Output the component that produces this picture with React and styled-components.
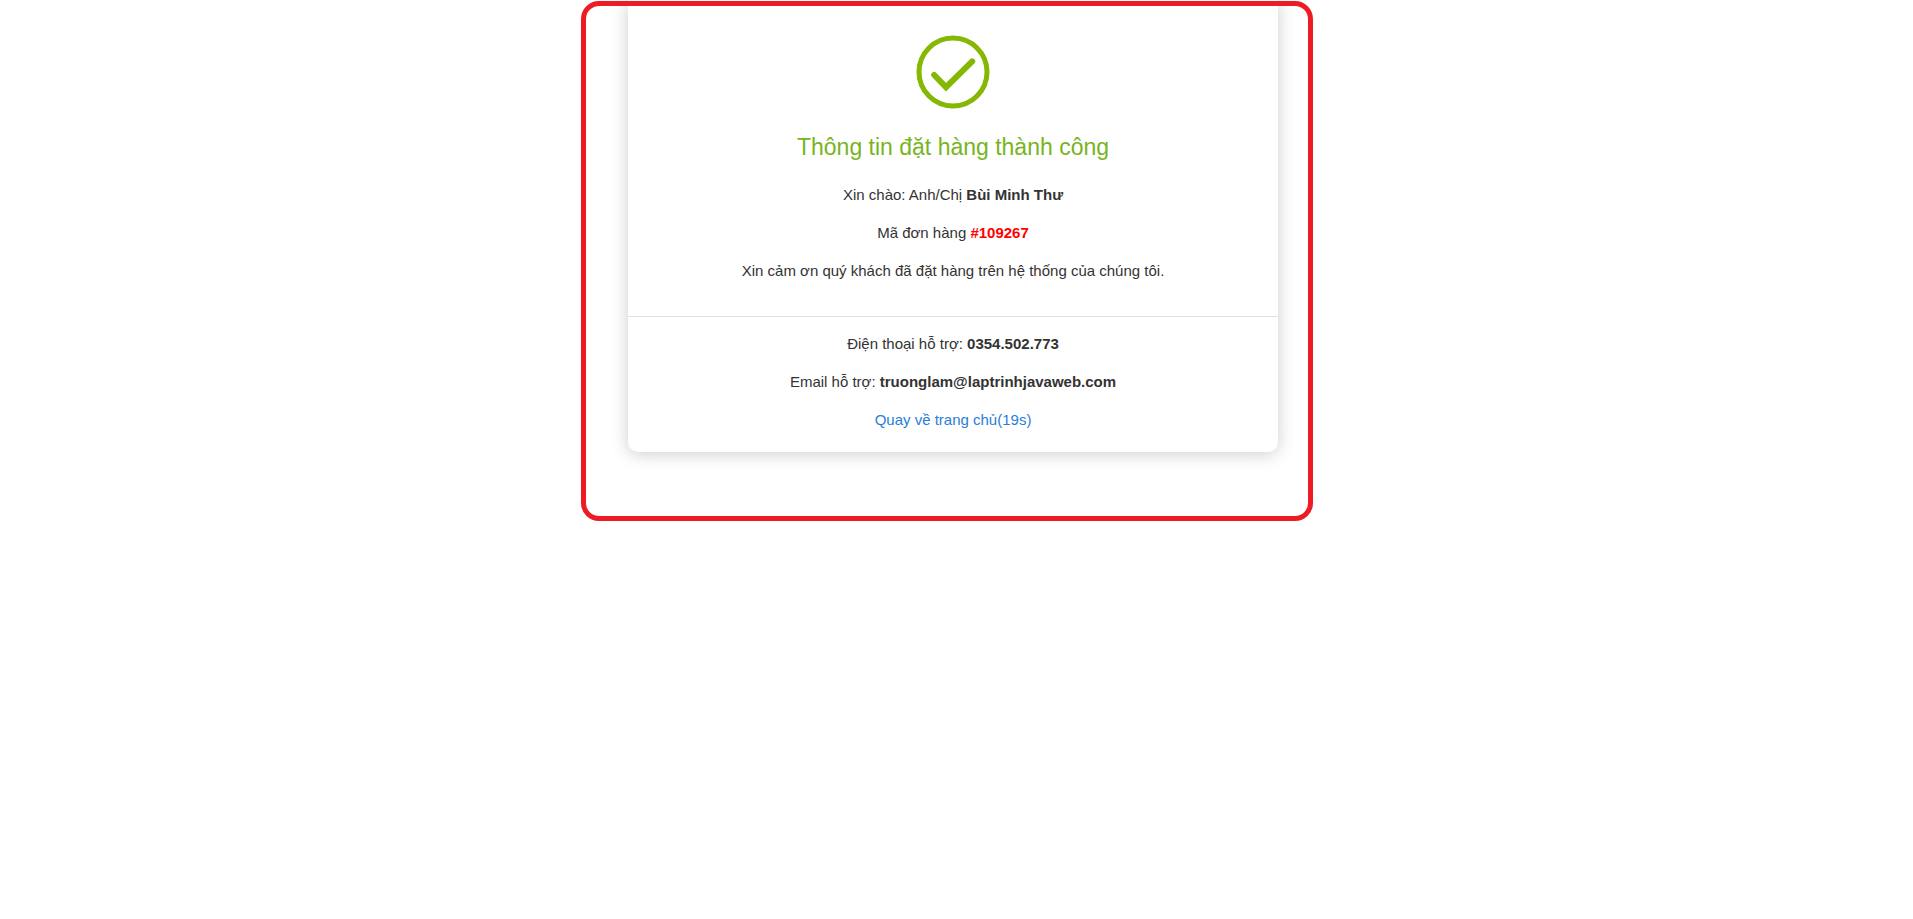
import React from "react";
import styled, { createGlobalStyle } from "styled-components";

const GlobalStyle = createGlobalStyle`
  *, *::before, *::after { box-sizing: border-box; }
  body {
    margin: 0;
    background: #fff;
    color: #333;
    font-family: "Liberation Sans", Arial, Helvetica, sans-serif;
    font-size: 15px;
    line-height: 24px;
  }
`;

const Page = styled.main`
  display: flex;
  justify-content: center;
  padding: 0 55px 69px 48px;
`;

const Card = styled.article`
  position: relative;
  width: 100%;
  max-width: 650px;
  background: #fff;
  border-radius: 0 0 10px 10px;
  box-shadow: 0 2px 18px rgba(0, 0, 0, 0.2);
  text-align: center;
`;

const Highlight = styled.div`
  position: absolute;
  inset: 1px -35px -69px -47px;
  border: 5px solid #ed1c24;
  border-radius: 18px;
  pointer-events: none;
`;

const Section = styled.section`
  display: flex;
  flex-direction: column;
  align-items: center;
  gap: 14px;
  padding: ${(p) => (p.$main ? "35px 15px 33px" : "15px 15px 20px")};
  border-top: ${(p) => (p.$main ? "none" : "1px solid #e1e1e1")};
`;

const CheckIcon = styled.svg`
  display: block;
  width: 74px;
  height: 74px;
`;

const Title = styled.h1`
  margin: 8px 0 6px;
  color: #78b41e;
  font-size: 23px;
  font-weight: 400;
  line-height: 32px;
`;

const Line = styled.p`
  margin: 0;
`;

const Strong = styled.strong`
  color: ${(p) => (p.$alert ? "#ff0000" : "inherit")};
  font-weight: 700;
`;

const HomeLink = styled.a`
  color: #287ed8;
  text-decoration: none;
`;

export default function App() {
  return (
    <>
      <GlobalStyle />
      <Page>
        <Card>
          <Section $main>
            <CheckIcon viewBox="0 0 74 74" fill="none" stroke="#84b803" strokeWidth="5" aria-hidden="true">
              <circle cx="37" cy="37" r="34" />
              <path d="M18.2 40 L30 52.2 L56.2 26.4" strokeWidth="6" strokeLinecap="round" />
            </CheckIcon>
            <Title>Thông tin đặt hàng thành công</Title>
            <Line>
              Xin chào: Anh/Chị <Strong>Bùi Minh Thư</Strong>
            </Line>
            <Line>
              Mã đơn hàng <Strong $alert>#109267</Strong>
            </Line>
            <Line>Xin cảm ơn quý khách đã đặt hàng trên hệ thống của chúng tôi.</Line>
          </Section>
          <Section>
            <Line>
              Điện thoại hỗ trợ: <Strong>0354.502.773</Strong>
            </Line>
            <Line>
              Email hỗ trợ: <Strong>truonglam@laptrinhjavaweb.com</Strong>
            </Line>
            <Line>
              <HomeLink href="#">Quay về trang chủ(19s)</HomeLink>
            </Line>
          </Section>
          <Highlight />
        </Card>
      </Page>
    </>
  );
}
